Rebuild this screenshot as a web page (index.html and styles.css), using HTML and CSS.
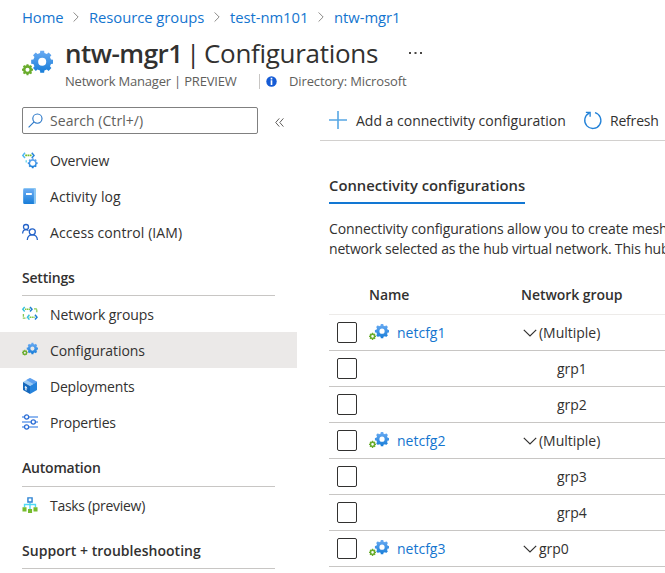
FILE: index.html
```html
<!DOCTYPE html>
<html lang="en">
<head>
<meta charset="utf-8">
<title>ntw-mgr1 | Configurations</title>
<link rel="stylesheet" href="styles.css">
</head>
<body>
<svg class="defs" width="0" height="0" aria-hidden="true">
  <defs>
    <linearGradient id="blue" x1="0" y1="0" x2="0" y2="1"><stop offset="0" stop-color="#6aabf3"/><stop offset="1" stop-color="#177dd8"/></linearGradient>
    <path id="gear" fill-rule="evenodd" d="M7.85-1.95 9.85-1.74V1.74L7.85 1.95 6.93 4.17 8.2 5.73 5.73 8.2 4.17 6.93 1.95 7.85 1.74 9.85H-1.74L-1.95 7.85-4.17 6.93-5.73 8.2-8.2 5.73-6.93 4.17-7.85 1.95-9.85 1.74V-1.74L-7.85-1.95-6.93-4.17-8.2-5.73-5.73-8.2-4.17-6.93-1.95-7.85-1.74-9.85H1.74L1.95-7.85 4.17-6.93 5.73-8.2 8.2-5.73 6.93-4.17ZM3.6 0A3.6 3.6 0 1 0-3.6 0 3.6 3.6 0 1 0 3.6 0Z"/>
    <symbol id="gears" viewBox="0 0 31 31">
      <use href="#gear" fill="url(#blue)" transform="translate(20.2 12.7) scale(1.12)"/>
      <use href="#gear" fill="#69ac2c" transform="translate(5.5 20.7) scale(.56)"/>
    </symbol>
    <symbol id="chevron" viewBox="0 0 14 8"><path d="M.8.8 7 7 13.2.8" fill="none" stroke="#323130" stroke-width="1.2"/></symbol>
    <symbol id="crumb" viewBox="0 0 7 12"><path d="M.7.7 6 6 .7 11.3" fill="none" stroke="#797775" stroke-width="1"/></symbol>
  </defs>
</svg>
<header class="top">
  <nav class="crumbs">
    <a class="c1">Home</a><svg><use href="#crumb"/></svg>
    <a class="c2">Resource groups</a><svg><use href="#crumb"/></svg>
    <a class="c3">test-nm101</a><svg><use href="#crumb"/></svg>
    <a>ntw-mgr1</a>
  </nav>
  <div class="heading">
    <svg class="logo"><use href="#gears"/></svg>
    <div class="titles">
      <div class="title"><h1>ntw-mgr1</h1><span class="bar">|</span><span class="page">Configurations</span><svg class="dots" viewBox="0 0 13 2"><path d="M0 0h2v2H0zM5.5 0h2v2h-2zM11 0h2v2h-2z" fill="#484644"/></svg></div>
      <div class="sub"><span class="kind">Network Manager | PREVIEW</span><i class="sep"></i><svg class="info" viewBox="0 0 12 12"><circle cx="6" cy="6" r="5.7" fill="#155bd5"/><path d="M5.1 2h1.8v1.7H5.1zM5.1 4.7h1.8v5H5.1z" fill="#fff"/></svg><span class="dir">Directory: Microsoft</span></div>
    </div>
  </div>
</header>
<div class="body">
  <aside class="side">
    <div class="searchrow">
      <div class="search"><svg viewBox="0 0 15 15" fill="none" stroke="#2b78c8" stroke-width="1.15"><circle cx="9.4" cy="5.6" r="4.6"/><path d="M6.1 8.9.6 14.4"/></svg><span>Search (Ctrl+/)</span></div>
      <svg class="collapse" viewBox="0 0 9 9" fill="none" stroke="#605e5c"><path d="M4.3.4.7 4.5l3.6 4.1M8.4.4 4.8 4.5l3.6 4.1"/></svg>
    </div>
    <ul class="nav">
      <li><svg viewBox="0 0 16 16" fill="none"><path d="M3 .8.8 3.4 3 6" stroke="#50b8f0" stroke-width="1.5"/><path d="M9.8.8 12 3.4 9.8 6" stroke="#2b88d8" stroke-width="1.5"/><path d="M3.2 3.4h6.4" stroke="#76bc2d" stroke-width="1.8" stroke-dasharray="1.8 .5"/><path d="M4.2 8.3v2.2" stroke="#50d0e8" stroke-width="1.2"/><use href="#gear" fill="url(#blue)" transform="translate(10.7 11.2) scale(.5)"/><circle cx="10.7" cy="11.2" r="2.5" fill="#fff"/></svg><span>Overview</span></li>
      <li><svg viewBox="0 0 16 16"><path d="M2.6 0H13a1 1 0 0 1 1 1v14a1 1 0 0 1-1 1H2.6A1.4 1.4 0 0 1 1.2 14.6V1.4A1.4 1.4 0 0 1 2.6 0Z" fill="#8cc7f3"/><path d="M2.5 1h9.4v15H2.5a1.2 1.2 0 0 1-1.2-1.2V2.2A1.2 1.2 0 0 1 2.5 1Z" fill="url(#blue)"/><path d="M4 5h5.8v2H4z" fill="#fff"/></svg><span class="wide">Activity log</span></li>
      <li><svg viewBox="0 0 16 16" fill="none" stroke="#2463c9" stroke-width="1.3"><circle cx="4" cy="3" r="2.5"/><path d="M.6 9.5C.8 6.9 2 5.7 4 5.7c1.1 0 1.9.3 2.4.9"/><circle cx="10.3" cy="7.8" r="3"/><path d="M5.3 16c.2-3.5 2-5.1 5-5.1s4.9 1.6 5.1 5.1"/></svg><span class="wide">Access control (IAM)</span></li>
    </ul>
    <h2>Settings</h2>
    <ul class="nav">
      <li><svg viewBox="0 0 16 16" fill="none" stroke-width="1.5"><path d="M2.7 1 .8 3.3l1.9 2.3M7.4 8.8 5.5 11.2l1.9 2.4" stroke="#37c2dd"/><path d="m8 1 2 2.3-2 2.3M13 8.8l2 2.4-2 2.4" stroke="#1f80d0"/><path d="M3 3.3h5M7.6 11.2h5" stroke="#82c541" stroke-dasharray="1.4 .5"/><path d="M12 2.8h2.8v4M1.4 8v4.2h3" stroke="#86c855" stroke-width="1.3" stroke-dasharray="2.8 .7"/></svg><span class="mid">Network groups</span></li>
      <li class="on"><svg><use href="#gears"/></svg><span class="mid">Configurations</span></li>
      <li><svg viewBox="0 0 16 16"><path d="M8 0 15 3.7 8 8 1 4Z" fill="#9ccbf5"/><path d="M4.3 2.1 11.5 6l3.5-2.3L8 0Z" fill="#5ea0ef"/><path d="M1 4 8 8v8l-7-4Z" fill="#1468bd"/><path d="M8 8 15 3.7V12l-7 4Z" fill="#2683dc"/><path d="m3.8 8.1 1.8 2.3-1.1-.4v2.8l-1.2-.7V9.4l-1-.2Z" fill="#fff"/></svg><span>Deployments</span></li>
      <li><svg viewBox="0 0 16 16" fill="#fff" stroke="#2e6fd6" stroke-width="1.3"><path d="M0 3h16M0 8h16M0 13h16" stroke="#6ba0ec" stroke-width="1.7"/><circle cx="4.6" cy="3" r="2.1"/><circle cx="11.3" cy="8" r="2.1"/><circle cx="4.6" cy="13" r="2.1"/></svg><span>Properties</span></li>
    </ul>
    <h2 class="tall">Automation</h2>
    <ul class="nav">
      <li><svg viewBox="0 0 16 17"><path d="M8 6v7M2.2 11V8h11.6v3" fill="none" stroke="#50d9f5" stroke-width="1.5"/><path d="M5.8.9h4.4v4.4H5.8z" fill="#fff" stroke="#2b82d4" stroke-width="1.5"/><path d="M0 11h4.3v4.3H0zM5.9 12.7h4.3V17H5.9zM11.7 11H16v4.3h-4.3z" fill="#76bc2d"/></svg><span class="tasks">Tasks (preview)</span></li>
    </ul>
    <h2 class="support">Support + troubleshooting</h2>
  </aside>
  <main>
    <div class="toolbar">
      <svg class="plus" viewBox="0 0 18 18"><path d="M9 0v18M0 9h18" stroke="#57a7e4" stroke-width="1.6"/></svg><span class="add">Add a connectivity configuration</span>
      <svg class="refresh" viewBox="0 0 20 20" fill="none" stroke="#2382d8" stroke-width="1.4"><path d="M12.6 1.7A8.5 8.5 0 1 1 6.5 2.3M3 1.5h4.5V6"/></svg><span class="cmd">Refresh</span>
    </div>
    <div class="content">
      <div class="tab">Connectivity configurations</div>
      <p><span class="line l1">Connectivity configurations allow you to create mesh</span><span class="line l2">network selected as the hub virtual network. This hub</span></p>
      <div class="table">
        <div class="row head"><span></span><span>Name</span><span>Network group</span></div>
        <div class="row"><i class="box"></i><a><svg class="cfg"><use href="#gears"/></svg>netcfg1</a><span class="group"><svg><use href="#chevron"/></svg>(Multiple)</span></div>
        <div class="row"><i class="box"></i><span></span><span class="child">grp1</span></div>
        <div class="row"><i class="box"></i><span></span><span class="child">grp2</span></div>
        <div class="row"><i class="box"></i><a><svg class="cfg"><use href="#gears"/></svg>netcfg2</a><span class="group"><svg><use href="#chevron"/></svg>(Multiple)</span></div>
        <div class="row"><i class="box"></i><span></span><span class="child">grp3</span></div>
        <div class="row"><i class="box"></i><span></span><span class="child">grp4</span></div>
        <div class="row"><i class="box"></i><a><svg class="cfg"><use href="#gears"/></svg>netcfg3</a><span class="group"><svg><use href="#chevron"/></svg>grp0</span></div>
      </div>
    </div>
  </main>
</div>
</body>
</html>
```
FILE: styles.css
```css
* { box-sizing: border-box; }
body { margin: 0; width: 665px; height: 573px; overflow: hidden; background: #fff; color: #323130; font: 14px/20px "Open Sans", "Noto Sans", sans-serif; letter-spacing: -.2px; white-space: nowrap; }
.defs { display: block; }
h1, h2, p, ul { margin: 0; padding: 0; font: inherit; }
a { color: #1475cf; }
svg { flex: none; overflow: visible; }
.top { height: 104px; padding-left: 22px; }
.crumbs { display: flex; align-items: center; height: 34px; font-size: 14.8px; letter-spacing: -.05px; }
.crumbs svg { width: 6px; height: 12px; margin-left: 10px; margin-right: 10px; }
.c1 { width: 41px; }
.c2 { width: 115px; }
.c3 { width: 78px; }
.heading { display: flex; }
.logo { width: 31px; height: 31px; margin-top: 15px; }
.titles { margin-left: 12px; }
.title { display: flex; align-items: center; height: 38px; font-size: 26px; line-height: 38px; }
h1 { width: 117px; font-weight: 600; letter-spacing: -.5px; }
.bar { width: 22px; margin-left: 4px; }
.page { width: 174px; margin-left: -4px; letter-spacing: -.3px; }
.dots { width: 13px; height: 2px; margin-left: 31px; }
.sub { display: flex; align-items: center; height: 18px; font-size: 13px; color: #605e5c; }
.kind { width: 173px; }
.sep { width: 1px; height: 15px; margin-left: 21px; background: #c8c6c4; }
.info { width: 11px; height: 11px; margin-left: 6px; }
.dir { margin-left: 12px; letter-spacing: -.13px; }
.body { display: flex; }
.side { width: 297px; flex: none; }
.searchrow { display: flex; align-items: center; height: 38px; padding: 0 0 5px 22px; }
.search { display: flex; align-items: center; width: 236px; height: 27px; border: 1px solid #808080; border-radius: 2px; padding-left: 5px; color: #605e5c; letter-spacing: .05px; }
.search svg { width: 15px; height: 15px; margin-right: 7px; }
.collapse { width: 9px; height: 9px; margin: 3px 0 0 17px; }
.nav { list-style: none; }
.nav li { display: flex; align-items: center; height: 36px; padding-left: 22px; }
.nav svg { width: 16px; height: 16px; margin-right: 12px; }
.nav span { padding-top: 2px; }
.nav .on { background: #ebe9e8; }
.wide { letter-spacing: .07px; }
.mid { letter-spacing: -.08px; }
.tasks { letter-spacing: -.3px; }
h2 { width: 253px; height: 46px; margin-left: 22px; padding-top: 18px; border-bottom: 1px solid #c8c6c4; font-weight: 600; letter-spacing: -.2px; }
.tall { height: 47px; }
.support { letter-spacing: .03px; }
main { flex: 1; min-width: 0; margin-left: 23px; }
.toolbar { display: flex; align-items: center; height: 37px; padding: 0 0 4px 9px; border-bottom: 1px solid #d2d0ce; }
.plus { width: 18px; height: 18px; margin-right: 9px; }
.add { width: 210px; padding-top: 2px; letter-spacing: 0; }
.cmd { padding-top: 2px; }
.refresh { width: 19px; height: 19px; margin: 0 8px 0 17px; }
.content { padding-left: 9px; }
.tab { width: 196px; height: 63px; padding-top: 34px; border-bottom: 2px solid #1277d3; font-size: 14.8px; font-weight: 600; letter-spacing: 0; }
p { padding-top: 15px; }
.line { display: block; }
.l1 { letter-spacing: -.11px; }
.l2 { letter-spacing: -.17px; }
.row { display: grid; grid-template-columns: 40px 152px 1fr; align-items: center; height: 36px; border-bottom: 1px solid #c8c6c4; }
.head { height: 56px; padding-top: 16px; border-color: #edebe9; font-weight: 600; letter-spacing: -.05px; }
.box { width: 20px; height: 21px; margin: -1px 0 0 8px; border: 1px solid #323130; border-radius: 2px; }
.row a, .group { display: flex; align-items: center; }
.row a { letter-spacing: 0; }
.cfg { width: 20px; height: 20px; margin-right: 8px; }
.group svg { width: 14px; height: 8px; margin: 0 2px 0 2px; }
.group, .child { letter-spacing: -.02px; }
.child { padding-left: 36px; }
```
